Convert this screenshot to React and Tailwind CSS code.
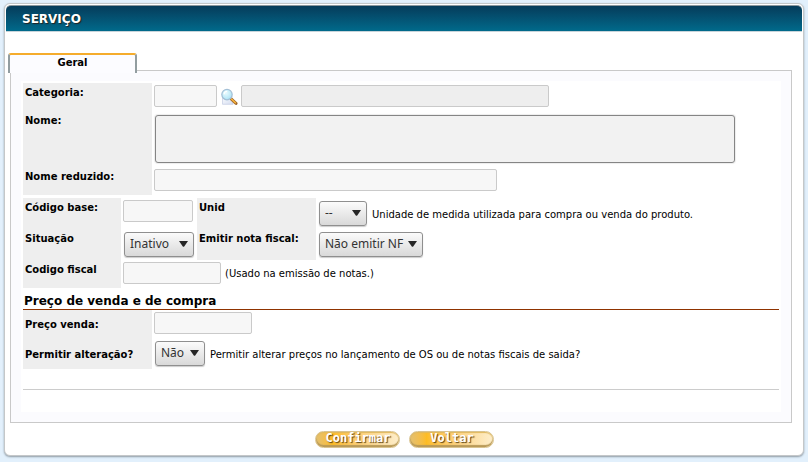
const inputBase =
  "block h-[22px] rounded-[2px] border border-[#cacaca] px-1 text-[10px] outline-none";

function Label({ htmlFor, className = "", children }) {
  return (
    <label
      htmlFor={htmlFor}
      className={`shrink-0 bg-[#eeeeee] pl-[2px] text-[10px] leading-[14px] font-bold ${className}`}
    >
      {children}
    </label>
  );
}

function Select({ id, options, className }) {
  return (
    <div className={`relative h-[26px] shrink-0 ${className}`}>
      <select
        id={id}
        className="h-[25px] w-full appearance-none rounded-[3px] border border-[#8f8f8f] bg-linear-to-b from-[#fbfbfb] to-[#d9d9d9] pl-[5px] font-['Noto_Sans',sans-serif] text-[12px] text-[#333333] shadow-[0_1px_1px_#cccccc] outline-none"
      >
        {options.map((o) => (
          <option key={o}>{o}</option>
        ))}
      </select>
      <svg
        viewBox="0 0 9 6"
        className="pointer-events-none absolute top-[9px] right-[6px] h-[6px] w-[9px]"
        aria-hidden="true"
      >
        <path d="M0 0h9L5.2 5.4q-.7.8-1.4 0z" fill="#262626" />
      </svg>
    </div>
  );
}

function SearchIcon() {
  return (
    <svg viewBox="0 0 18 18" className="h-[18px] w-[18px]" aria-hidden="true">
      <defs>
        <linearGradient id="sheet" x1="0" y1="0" x2="1" y2="1">
          <stop offset="0" stopColor="#ffffff" />
          <stop offset="1" stopColor="#d3dcf0" />
        </linearGradient>
        <radialGradient id="lens" cx="0.4" cy="0.35" r="0.7">
          <stop offset="0" stopColor="#e9fbff" />
          <stop offset="1" stopColor="#a9e2f5" />
        </radialGradient>
      </defs>
      <path d="M2.5 7h9l1.5 9.3H2.5z" fill="url(#sheet)" stroke="#c3cce2" strokeWidth="0.7" />
      <path d="M11.4 11.2l4.6 4.2" stroke="#a0682c" strokeWidth="3" strokeLinecap="round" />
      <path d="M11.4 11l4 3.7" stroke="#f9b53c" strokeWidth="1.5" strokeLinecap="round" />
      <circle cx="7" cy="6.6" r="5.2" fill="url(#lens)" stroke="#a3bfd6" strokeWidth="1.2" />
      <path d="M4 6.4a3.2 3.2 0 0 1 3.2-3" stroke="#ffffff" strokeWidth="1.1" fill="none" />
    </svg>
  );
}

function PillButton({ children }) {
  return (
    <button
      type="button"
      className="flex h-[17px] w-[85px] items-center justify-center rounded-full border border-[#d9c390] bg-linear-to-r from-[#e3c070] via-[#fdbc22] via-20% to-[#fdeecb] pb-[3px] pl-[2px] font-['DejaVu_Sans_Mono',monospace] text-[12px] leading-[14px] font-bold text-white shadow-[inset_0_-2px_1px_#b99a58,inset_0_1px_1px_#e0b85c] [text-shadow:1px_1px_1px_#5e4416]"
    >
      {children}
    </button>
  );
}

export default function App() {
  return (
    <div className="min-h-screen bg-[#e2f0fc] px-1 pt-[3px] pb-[6px] font-['DejaVu_Sans',sans-serif] text-[10px] text-black">
      <main className="rounded-[6px] border border-[#c4c7c9] bg-white p-px pb-[7px] shadow-[0_1px_2px_#8f9ba5]">
        <header className="flex h-[27px] items-center rounded-t-[5px] border-t border-b border-t-[#8b979d] border-b-[#c8d4da] bg-linear-to-b from-[#053c5b] to-[#006a8b] pl-4">
          <h1 className="text-[12px] leading-[16px] font-bold text-white [text-shadow:1px_1px_1px_#222222]">
            SERVIÇO
          </h1>
        </header>

        <div className="px-1 pt-[21px]">
          <div className="flex">
            <button
              type="button"
              aria-current="page"
              className="relative z-10 -mb-[3px] -ml-[2px] h-5 w-[129px] rounded-t-[3px] border-x-2 border-t-2 border-x-[#929da0] border-t-[#f5ac2c] bg-[#fcfcff] pb-[2px] text-[10px] leading-[14px] font-bold"
            >
              Geral
            </button>
          </div>

          <form className="mr-[6px] border border-[#c9c9c9] bg-[#fbfbfe] p-[10px]">
            <div className="bg-white px-[2px] pt-[2px] pb-[22px]">
              <section className="flex flex-col">
                <div className="flex h-7">
                  <Label htmlFor="categoria" className="w-[129px] pt-[3px]">
                    Categoria:
                  </Label>
                  <div className="flex min-w-0 flex-1 items-start pt-[2px] pl-[2px]">
                    <input id="categoria" className={`${inputBase} w-[63px] bg-[#f7f7f7]`} />
                    <button type="button" aria-label="Pesquisar" className="mx-[3px] pt-[3px]">
                      <SearchIcon />
                    </button>
                    <input
                      aria-label="Descrição da categoria"
                      disabled
                      className={`${inputBase} w-[308px] bg-[#eeeeee]`}
                    />
                  </div>
                </div>
                <div className="flex h-14">
                  <Label htmlFor="nome" className="w-[129px] pt-[3px]">
                    Nome:
                  </Label>
                  <div className="min-w-0 flex-1 pt-1 pl-[3px]">
                    <textarea
                      id="nome"
                      className="block h-12 w-[580px] max-w-full resize-none rounded-[3px] border border-[#858585] bg-[#f2f2f2] p-1 shadow-[0_0_1px_1px_#ededed] outline-none"
                    />
                  </div>
                </div>
                <div className="flex h-7">
                  <Label htmlFor="reduzido" className="w-[129px] pt-[3px]">
                    Nome reduzido:
                  </Label>
                  <div className="pt-[2px] pl-[2px]">
                    <input id="reduzido" className={`${inputBase} w-[343px] bg-[#f7f7f7]`} />
                  </div>
                </div>
              </section>

              <section className="mt-[3px] flex flex-col">
                <div className="flex h-[31px]">
                  <Label htmlFor="codigo" className="w-[98px] pt-[3px]">
                    Código base:
                  </Label>
                  <div className="w-[76px] shrink-0 pt-[2px] pl-[2px]">
                    <input id="codigo" className={`${inputBase} w-[70px] bg-[#f7f7f7]`} />
                  </div>
                  <Label htmlFor="unid" className="w-[119px] pt-[3px]">
                    Unid
                  </Label>
                  <div className="flex items-center gap-[5px] pl-[3px]">
                    <Select id="unid" options={["--"]} className="w-12" />
                    <span className="pt-px">
                      Unidade de medida utilizada para compra ou venda do produto.
                    </span>
                  </div>
                </div>
                <div className="flex h-[31px]">
                  <Label htmlFor="situacao" className="w-[98px] pt-[3px]">
                    Situação
                  </Label>
                  <div className="flex w-[76px] shrink-0 items-center pl-[3px]">
                    <Select id="situacao" options={["Inativo", "Ativo"]} className="w-[70px]" />
                  </div>
                  <Label htmlFor="nota" className="w-[119px] pt-[3px]">
                    Emitir nota fiscal:
                  </Label>
                  <div className="flex items-center pl-[3px]">
                    <Select id="nota" options={["Não emitir NF", "Emitir NF"]} className="w-[104px]" />
                  </div>
                </div>
                <div className="flex h-7">
                  <Label htmlFor="fiscal" className="w-[98px] pt-[3px]">
                    Codigo fiscal
                  </Label>
                  <div className="flex items-center gap-1 pb-[2px] pl-[2px]">
                    <input id="fiscal" className={`${inputBase} w-[98px] bg-[#f7f7f7]`} />
                    <span>(Usado na emissão de notas.)</span>
                  </div>
                </div>
              </section>

              <h2 className="mt-1 border-b border-[#8f3300] pt-[1px] pl-[1px] text-[12px] leading-4 font-bold">
                Preço de venda e de compra
              </h2>

              <section className="flex flex-col">
                <div className="flex h-7">
                  <Label htmlFor="preco" className="w-[129px] pt-2">
                    Preço venda:
                  </Label>
                  <div className="pt-[2px] pl-[2px]">
                    <input id="preco" className={`${inputBase} w-[98px] bg-[#f7f7f7]`} />
                  </div>
                </div>
                <div className="flex h-[31px]">
                  <Label htmlFor="permitir" className="w-[129px] pt-[10px]">
                    Permitir alteração?
                  </Label>
                  <div className="flex items-center gap-[5px] pl-[3px]">
                    <Select id="permitir" options={["Não", "Sim"]} className="w-[50px]" />
                    <span className="pt-px">
                      Permitir alterar preços no lançamento de OS ou de notas fiscais de saida?
                    </span>
                  </div>
                </div>
              </section>

              <hr className="mt-5 border-t border-[#cccccc]" />
            </div>
          </form>

          <div className="flex justify-center gap-[9px] pt-2">
            <PillButton>Confirmar</PillButton>
            <PillButton>Voltar</PillButton>
          </div>
        </div>
      </main>
    </div>
  );
}
